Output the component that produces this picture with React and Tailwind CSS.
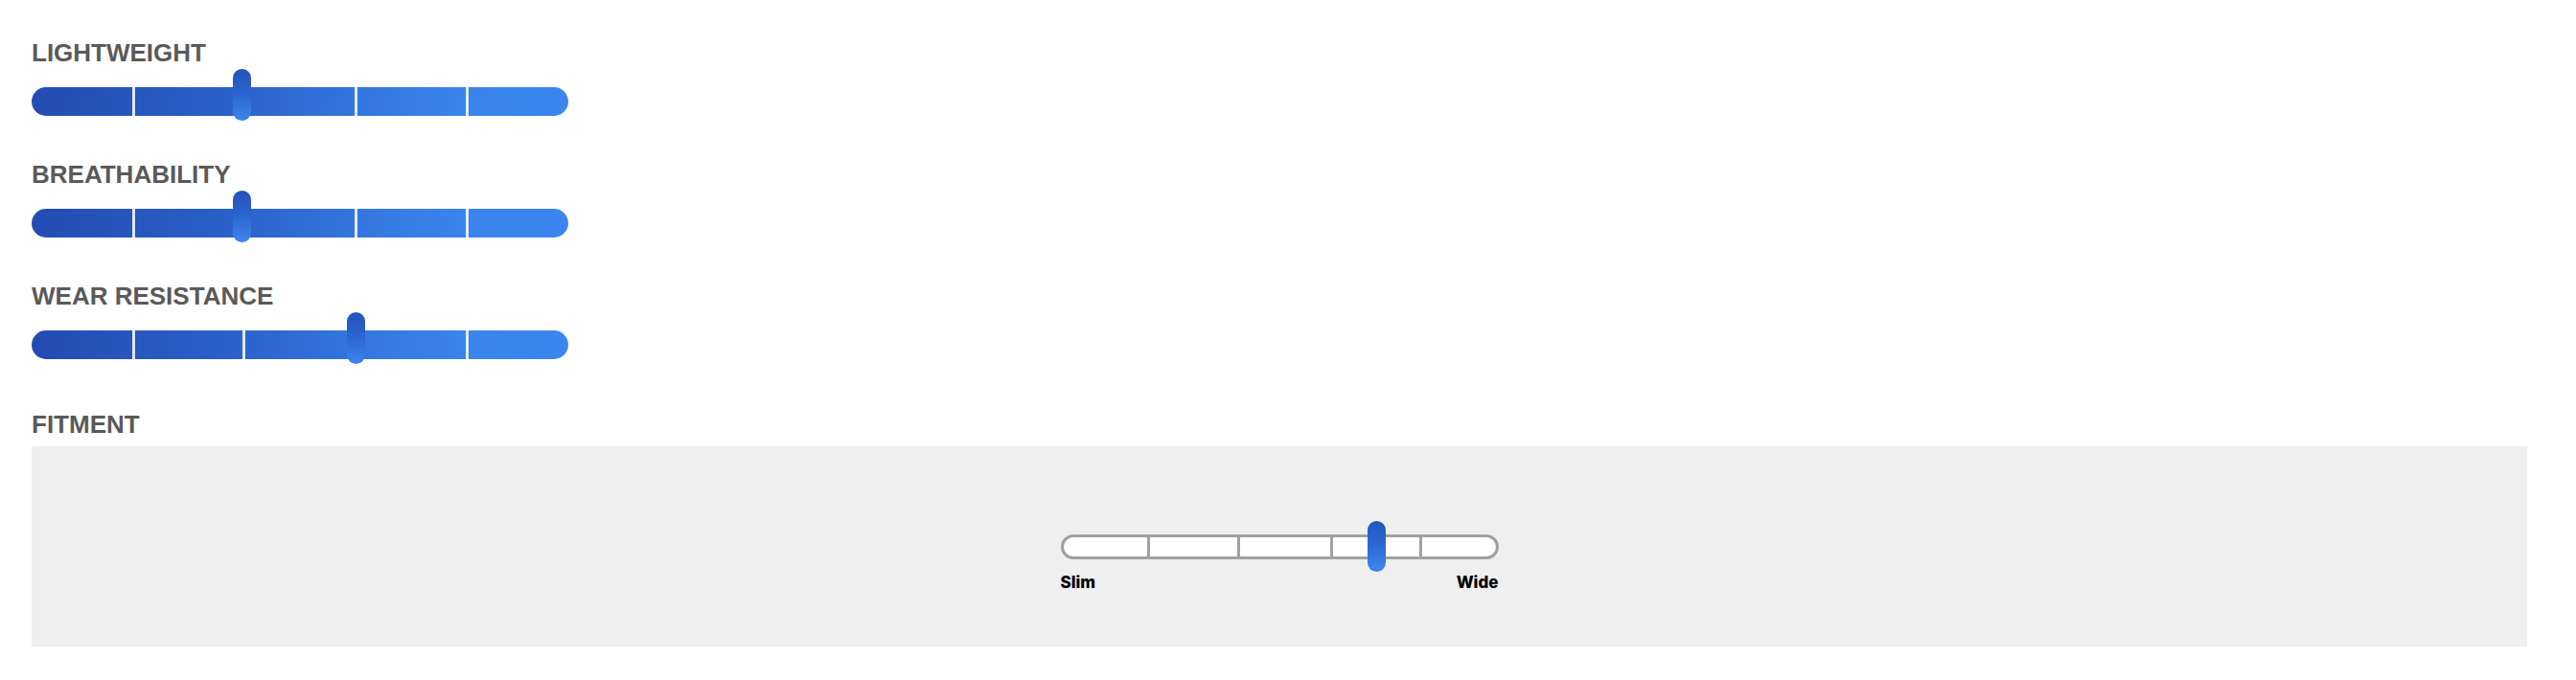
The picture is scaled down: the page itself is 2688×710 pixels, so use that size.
import React from 'react';

// rating bars: divider segments are fixed widths, thumb sits over one divider
const ratings = [
    { label: 'LIGHTWEIGHT', thumb: 'left-[210px]' },
    { label: 'BREATHABILITY', thumb: 'left-[210px]' },
    { label: 'WEAR RESISTANCE', thumb: 'left-[329px]' },
];

const labelClass = "text-[26px] leading-[30px] font-bold text-[#5a5a5a] font-['Liberation_Sans',Arial,sans-serif]";

const RatingBar = ({ label, thumb, className = '' }) => (
    <div className={className}>
        <div className={labelClass}>{label}</div>
        <div className="relative mt-[2px] h-[54px] w-[560px] pt-[19px]">
            <div className="flex h-[30px] w-full overflow-hidden rounded-full bg-[linear-gradient(to_right,#234cb2_0%,#2a5fc8_35%,#3376dd_60%,#3a84ec_80%,#3b86ee_100%)]">
                <div className="w-[105px]" />
                <div className="w-[115px] border-l-[3px] border-white/85" />
                <div className="w-[117px] border-l-[3px] border-white/85" />
                <div className="w-[116px] border-l-[3px] border-white/85" />
                <div className="flex-1 border-l-[3px] border-white/85" />
            </div>
            <div className={`absolute top-0 h-[54px] w-[19px] rounded-full bg-[linear-gradient(to_bottom,#2452ba,#2d66d0_50%,#3b86ee)] ${thumb}`} />
        </div>
    </div>
);

const FitmentScale = () => (
    <div className="w-[457px]">
        <div className="relative flex h-[53px] items-center">
            <div className="flex h-[26px] w-full overflow-hidden rounded-full border-[3px] border-[#a0a0a0] bg-white">
                <div className="w-[87px]" />
                <div className="w-[94px] border-l-[3px] border-[#a0a0a0]" />
                <div className="w-[97px] border-l-[3px] border-[#a0a0a0]" />
                <div className="w-[93px] border-l-[3px] border-[#a0a0a0]" />
                <div className="flex-1 border-l-[3px] border-[#a0a0a0]" />
            </div>
            <div className="absolute left-[320px] top-0 h-[53px] w-[19px] rounded-full bg-[linear-gradient(to_bottom,#2455bd,#2e6ad3_50%,#3c88f0)]" />
        </div>
        <div className="mt-px flex justify-between text-[17px] leading-5 font-extrabold text-black font-['Inter',sans-serif]">
            <span>Slim</span>
            <span>Wide</span>
        </div>
    </div>
);

const App = () => {
    return (
        <div className="bg-white pl-[33px] pr-[51px] pt-[40px] pb-[35px]">
            {ratings.map((r, i) => (
                <RatingBar key={r.label} label={r.label} thumb={r.thumb} className={i > 0 ? 'mt-[41px]' : ''} />
            ))}

            <div className={`mt-[48px] ${labelClass}`}>FITMENT</div>
            <div className="mt-[8px] flex h-[209px] justify-center bg-[#efefef] pt-[78px]">
                <FitmentScale />
            </div>
        </div>
    );
};

export default App;
